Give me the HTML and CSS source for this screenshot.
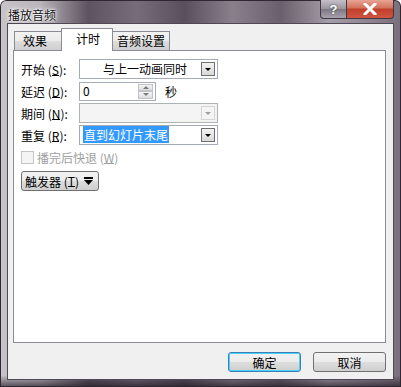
FILE: index.html
```html
<!DOCTYPE html>
<html lang="zh">
<head>
    <meta charset="UTF-8">
    <title>播放音频</title>
    <link rel="stylesheet" href="styles.css">
</head>
<body>
    <div class="window">
        <!-- Заголовок окна -->
        <div class="titlebar">
            <span class="title">播放音频</span>
            <div class="caption-btns">
                <div class="cap-btn help-btn">?</div>
                <div class="cap-btn close-btn">
                    <svg width="14" height="12" viewBox="0 0 14 12">
                        <path d="M2 1 L12 11 M12 1 L2 11" stroke="#fff" stroke-width="3" stroke-linecap="square"/>
                    </svg>
                </div>
            </div>
        </div>

        <div class="client">
            <!-- Вкладки -->
            <div class="tabs">
                <div class="tab tab-effect">效果</div>
                <div class="tab tab-active">计时</div>
                <div class="tab tab-sound">音频设置</div>
            </div>

            <div class="panel">
                <div class="row">
                    <span class="label">开始 (<u>S</u>):</span>
                    <div class="combo">
                        <span class="combo-text centered">与上一动画同时</span>
                        <span class="drop"><i class="arrow"></i></span>
                    </div>
                </div>
                <div class="row">
                    <span class="label">延迟 (<u>D</u>):</span>
                    <div class="spin-box">
                        <span class="combo-text">0</span>
                        <span class="spin">
                            <span class="spin-half"><i class="up"></i></span>
                            <span class="spin-half"><i class="down"></i></span>
                        </span>
                    </div>
                    <span class="unit">秒</span>
                </div>
                <div class="row">
                    <span class="label">期间 (<u>N</u>):</span>
                    <div class="combo disabled">
                        <span class="combo-text"></span>
                        <span class="drop"><i class="arrow"></i></span>
                    </div>
                </div>
                <div class="row">
                    <span class="label">重复 (<u>R</u>):</span>
                    <div class="combo">
                        <span class="combo-text"><span class="selected">直到幻灯片末尾</span></span>
                        <span class="drop"><i class="arrow"></i></span>
                    </div>
                </div>
                <div class="check-row">
                    <span class="checkbox"></span>
                    <span class="check-label">播完后快退 (<u>W</u>)</span>
                </div>
                <div class="trigger-btn">触发器 (<u>T</u>)
                    <svg class="dbl-arrow" width="9" height="9" viewBox="0 0 9 9">
                        <rect x="0" y="0" width="9" height="2" fill="#000"/>
                        <path d="M0 3 H9 L4.5 8 Z" fill="#000"/>
                    </svg>
                </div>
            </div>

            <!-- Кнопки -->
            <div class="footer">
                <button class="btn btn-default">确定</button>
                <button class="btn">取消</button>
            </div>
        </div>
    </div>
</body>
</html>
```

FILE: styles.css
```css
body {
    margin: 0;
    width: 401px;
    height: 387px;
    overflow: hidden;
    font-family: "Noto Sans CJK SC", "Liberation Sans", sans-serif;
    font-size: 12px;
    color: #000;
}

/* Стеклянная рамка */
.window {
    width: 401px;
    height: 387px;
    box-sizing: border-box;
    padding: 0 7px 7px 7px;
    display: flex;
    flex-direction: column;
    border-radius: 6px 6px 0 0;
    background:
        linear-gradient(180deg, rgba(0, 0, 0, 0) 0%, rgba(0, 0, 0, 0) 97%, rgba(30, 22, 34, 0.7) 100%),
        linear-gradient(90deg, #c8c3c9 0%, #b9b3ba 10%, #5e5360 22%, #776c79 34%, #5a4f5c 46%, #8a808c 58%, #6a5f6c 70%, #a49ca6 82%, #8d8490 92%, #7a707d 100%);
    box-shadow: inset 0 0 0 1px #2e2832;
}

.titlebar {
    height: 29px;
    display: flex;
    align-items: flex-start;
    justify-content: space-between;
}

.title {
    margin-top: 6px;
    margin-left: 1px;
    font-size: 12px;
    color: #111;
    text-shadow: 0 0 6px #fff, 0 0 3px #fff, 0 0 2px #fff;
}

.caption-btns {
    display: flex;
}

.cap-btn {
    height: 19px;
    box-sizing: border-box;
    border: 1px solid #3e3844;
    border-top: none;
    display: flex;
    align-items: center;
    justify-content: center;
    color: #fff;
    font-weight: bold;
    font-family: "Liberation Sans", sans-serif;
    font-size: 13px;
}

.help-btn {
    width: 27px;
    border-radius: 0 0 0 4px;
    background: linear-gradient(180deg, #c5c0c8 0%, #9a949e 50%, #7d7782 51%, #a8a2ac 100%);
    text-shadow: 0 0 2px #333;
}

.close-btn {
    width: 47px;
    border-left: none;
    border-radius: 0 0 4px 0;
    background: linear-gradient(180deg, #e8a493 0%, #d0705a 45%, #c0402a 50%, #d05540 100%);
}

/* Клиентская область */
.client {
    flex: 1;
    background: #f0f0f0;
    border: 1px solid #4e4854;
    padding: 3px 7px 7px 5px;
    display: flex;
    flex-direction: column;
}

.tabs {
    display: flex;
    height: 23px;
    align-items: flex-end;
    margin-left: 1px;
    position: relative;
    z-index: 1;
}

.tab {
    height: 19px;
    box-sizing: border-box;
    border: 1px solid #898c95;
    border-bottom: none;
    background: linear-gradient(180deg, #f2f2f2 0%, #ebebeb 50%, #dddddd 51%, #cfcfcf 100%);
    padding: 0 8px;
    line-height: 18px;
    white-space: nowrap;
}

.tab-effect {
    width: 47px;
    border-right: none;
}

.tab-active {
    width: 52px;
    height: 23px;
    background: #fff;
    margin-bottom: -1px;
    padding-left: 14px;
    line-height: 20px;
}

.tab-sound {
    width: 57px;
    border-left: none;
    padding: 0 0 0 4px;
}

.panel {
    height: 283px;
    background: #fff;
    border: 1px solid #898c95;
    padding: 8px 8px 0 7px;
    display: flex;
    flex-direction: column;
    gap: 2px;
}

.row {
    display: flex;
    align-items: center;
    height: 20px;
}

.label {
    width: 58px;
    flex-shrink: 0;
}

u {
    text-decoration: none;
    border-bottom: 1px solid #000;
    line-height: 11px;
    display: inline-block;
}

.combo {
    width: 139px;
    height: 20px;
    box-sizing: border-box;
    border: 1px solid #a5acb5;
    display: flex;
    align-items: center;
    padding: 1px;
}

.combo-text {
    flex: 1;
    padding-left: 2px;
    line-height: 16px;
}

.centered {
    text-align: center;
    padding-left: 8px;
}

.selected {
    background: #3399ff;
    color: #fff;
    padding: 0 1px;
}

.drop {
    width: 14px;
    height: 14px;
    box-sizing: border-box;
    border: 1px solid #707070;
    background: linear-gradient(180deg, #f2f2f2 0%, #e6e6e6 50%, #d8d8d8 100%);
    display: flex;
    align-items: center;
    justify-content: center;
    margin-right: 1px;
}

.arrow {
    width: 0;
    height: 0;
    border-left: 3px solid transparent;
    border-right: 3px solid transparent;
    border-top: 3px solid #000;
}

.disabled {
    background: #f4f4f4;
    border-color: #adb2b5;
}

.disabled .drop {
    border-color: #d5d5d5;
    background: #f4f4f4;
}

.disabled .arrow {
    border-top-color: #a0a0a0;
}

.spin-box {
    width: 77px;
    height: 19px;
    box-sizing: border-box;
    border: 1px solid #a5acb5;
    display: flex;
    align-items: center;
    padding: 1px;
}

.spin {
    width: 15px;
    height: 15px;
    display: flex;
    flex-direction: column;
    margin-right: 1px;
}

.spin-half {
    flex: 1;
    box-sizing: border-box;
    border: 1px solid #c0c4ca;
    background: linear-gradient(180deg, #f4f4f4, #dedede);
    display: flex;
    align-items: center;
    justify-content: center;
}

.up {
    border-left: 3px solid transparent;
    border-right: 3px solid transparent;
    border-bottom: 3px solid #7a7a7a;
}

.down {
    border-left: 3px solid transparent;
    border-right: 3px solid transparent;
    border-top: 3px solid #7a7a7a;
}

.unit {
    margin-left: 9px;
}

.check-row {
    display: flex;
    align-items: center;
    height: 20px;
    color: #a0a0a0;
}

.checkbox {
    width: 13px;
    height: 13px;
    box-sizing: border-box;
    border: 1px solid #c4c4c4;
    background: #f4f4f4;
    margin-right: 3px;
}

.check-label u {
    border-bottom-color: #a0a0a0;
}

.trigger-btn {
    width: 78px;
    height: 20px;
    box-sizing: border-box;
    border: 1px solid #707070;
    border-radius: 3px;
    background: linear-gradient(180deg, #f2f2f2 0%, #ebebeb 50%, #dddddd 51%, #cfcfcf 100%);
    display: flex;
    align-items: center;
    padding-left: 3px;
    margin-top: 2px;
    white-space: nowrap;
}

.dbl-arrow {
    margin-left: 5px;
}

/* Нижние кнопки */
.footer {
    display: flex;
    justify-content: flex-end;
    gap: 12px;
    margin-top: 9px;
}

.btn {
    width: 73px;
    height: 20px;
    font-family: inherit;
    font-size: 12px;
    border: 1px solid #707070;
    border-radius: 3px;
    background: linear-gradient(180deg, #f2f2f2 0%, #ebebeb 50%, #dddddd 51%, #cfcfcf 100%);
    padding: 0;
    color: #000;
}

.btn-default {
    border-color: #3c7fb1;
    box-shadow: inset 0 0 0 1px #48d1ff;
}
```
